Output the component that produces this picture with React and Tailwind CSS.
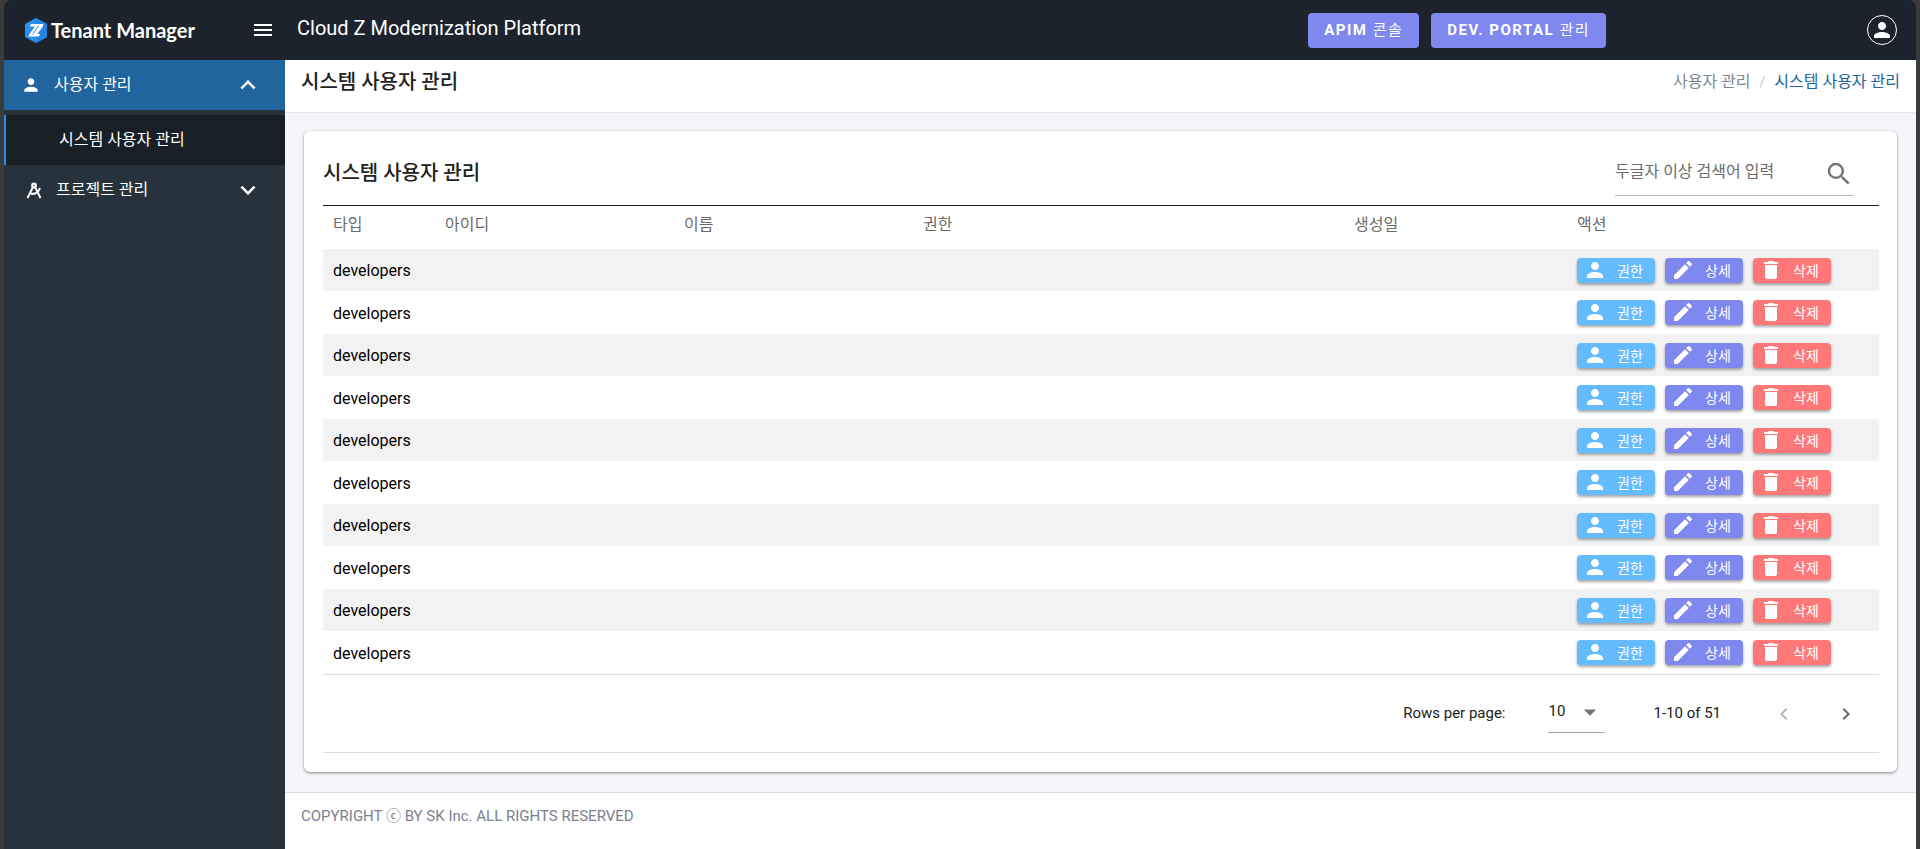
import { useState } from 'react';
import {
  MdArrowDropDown,
  MdChevronLeft,
  MdChevronRight,
  MdDelete,
  MdEdit,
  MdExpandLess,
  MdExpandMore,
  MdMenu,
  MdPerson,
  MdSearch,
} from 'react-icons/md';

const users = Array.from({ length: 10 }, (_, i) => ({
  id: i + 1,
  type: 'developers',
}));

function Logo() {
  return (
    <svg viewBox="0 0 22 25" className="w-[22px] h-[25px] shrink-0" aria-hidden="true">
      <path d="M11 0 22 6v13l-11 6L0 19V6z" fill="#2a8ff0" />
      <path d="M11 0 22 6v13l-11 6z" fill="#2384e4" />
      <path d="M6 6h12.500l-1 3-5 7H15l-1 2.500H3.500l1-2.500L10 8.500H5z" fill="#fff" />
      <path d="m13.500 8-6 8.500" stroke="#2a8ff0" strokeWidth="1" />
    </svg>
  );
}

function CompassIcon() {
  return (
    <svg viewBox="0 0 16 17" className="w-4 h-[17px]" fill="none" stroke="#fff" aria-hidden="true">
      <circle cx="8" cy="3.500" r="1.800" strokeWidth="2.200" />
      <path d="M7.500 4 1.500 16M8.500 4l6 12M4 11.500c4 1 8 0 10-5.500" strokeWidth="2" />
    </svg>
  );
}

function ActionButton({ icon: Icon, label, className }) {
  return (
    <button
      className={`flex items-center w-[78px] h-[25px] pl-[6px] gap-[10px] text-sm leading-6 text-white rounded shadow-[0_2px_3px_rgba(0,0,0,0.35)] ${className}`}
    >
      <Icon className="w-6 h-6 mb-[2px] shrink-0" />
      {label}
    </button>
  );
}

function Header() {
  return (
    <header className="flex items-center h-[60px] bg-[#1c232c] text-white">
      <div className="flex items-center w-[281px] pl-[21px] pr-[10px] shrink-0">
        <Logo />
        <span className="ml-1 font-[Lato] text-xl font-bold">Tenant Manager</span>
        <button className="ml-auto" aria-label="메뉴">
          <MdMenu className="w-6 h-6" />
        </button>
      </div>
      <h1 className="pb-1 pl-3 text-xl">Cloud Z Modernization Platform</h1>
      <div className="flex gap-3 ml-auto mr-[261px] text-[15px]">
        <button className="h-[35px] px-4 tracking-widest bg-[#7e88ee] rounded">
          <b>APIM</b> 콘솔
        </button>
        <button className="h-[35px] px-4 tracking-widest bg-[#7e88ee] rounded">
          <b>DEV. PORTAL</b> 관리
        </button>
      </div>
      <button
        className="flex items-center justify-center w-[30px] h-[30px] mr-[19px] border border-white rounded-full"
        aria-label="내 정보"
      >
        <MdPerson className="w-6 h-6" />
      </button>
    </header>
  );
}

function Sidebar() {
  const [userOpen, setUserOpen] = useState(true);

  return (
    <nav className="w-[281px] shrink-0 bg-[#26333c] text-white">
      <button
        className="flex items-center w-full h-[50px] pl-[17px] pr-[22px] bg-[#21659e]"
        onClick={() => setUserOpen(!userOpen)}
      >
        <MdPerson className="w-5 h-5" />
        <span className="ml-[13px]">사용자 관리</span>
        {userOpen ? (
          <MdExpandLess className="ml-auto w-[30px] h-[30px]" />
        ) : (
          <MdExpandMore className="ml-auto w-[30px] h-[30px]" />
        )}
      </button>
      {userOpen && (
        <a
          href="#users"
          className="flex items-center h-[50px] mt-[5px] pl-[53px] border-l-2 border-[#2a8ff0] bg-[#181f26]"
        >
          시스템 사용자 관리
        </a>
      )}
      <button className="flex items-center w-full h-[50px] pl-[22px] pr-[22px]">
        <CompassIcon />
        <span className="ml-[14px]">프로젝트 관리</span>
        <MdExpandMore className="ml-auto w-[30px] h-[30px]" />
      </button>
    </nav>
  );
}

function UserTable() {
  return (
    <table className="w-full text-left border-b border-separate border-spacing-0 table-fixed border-[#dcdcdc]">
      <thead>
        <tr className="h-[43px] text-[#6b6b6b] align-top">
          <th className="w-[112px] px-[10px] py-[7px] font-normal">타입</th>
          <th className="w-[239px] px-[10px] py-[7px] font-normal">아이디</th>
          <th className="w-[239px] px-[10px] py-[7px] font-normal">이름</th>
          <th className="px-[10px] py-[7px] font-normal">권한</th>
          <th className="w-[223px] px-[10px] py-[7px] font-normal">생성일</th>
          <th className="w-[312px] px-[10px] py-[7px] font-normal">액션</th>
        </tr>
      </thead>
      <tbody>
        {users.map((user) => (
          <tr key={user.id} className="h-[43px] odd:h-[42px] odd:bg-[#f2f2f2] text-black">
            <td className="px-[10px] pt-[2px]">{user.type}</td>
            <td />
            <td />
            <td />
            <td />
            <td className="px-[10px] pt-[9px] pb-2 align-top">
              <div className="flex gap-[10px]">
                <ActionButton icon={MdPerson} label="권한" className="bg-[#64bcff]" />
                <ActionButton icon={MdEdit} label="상세" className="bg-[#7e88ee]" />
                <ActionButton icon={MdDelete} label="삭제" className="bg-[#ff7878]" />
              </div>
            </td>
          </tr>
        ))}
      </tbody>
    </table>
  );
}

function Pagination() {
  return (
    <div className="flex items-center justify-end h-[78px] pr-5 text-[15px] border-b border-[#dcdcdc]">
      <label htmlFor="rows">Rows per page:</label>
      <div className="relative ml-[43px]">
        <select
          id="rows"
          className="w-[57px] h-[38px] pb-1 appearance-none border-b border-[#a5a5a5] bg-transparent"
        >
          <option>10</option>
        </select>
        <MdArrowDropDown className="absolute right-0 top-[2px] w-[30px] h-[30px] text-[#757575] pointer-events-none" />
      </div>
      <span className="ml-12">1-10 of 51</span>
      <button className="ml-[51px] text-[#b5b5b5]" aria-label="이전" disabled>
        <MdChevronLeft className="w-6 h-6" />
      </button>
      <button className="ml-[38px] mr-px text-[#666]" aria-label="다음">
        <MdChevronRight className="w-6 h-6" />
      </button>
    </div>
  );
}

export default function App() {
  return (
    <div className="min-h-screen px-1 bg-[#3b3b3b] font-[Roboto,'Noto_Sans_CJK_KR',sans-serif] text-base text-[#212121]">
      <div className="flex flex-col min-h-screen overflow-hidden rounded-t-lg">
        <Header />
        <div className="flex flex-1">
          <Sidebar />
          <div className="flex flex-col flex-1 min-w-0 bg-[#f5f6fa]">
            <div className="flex justify-between h-[53px] pl-4 pr-4 pt-[6px] bg-white border-b border-[#e7e7e7]">
              <h2 className="text-xl font-medium leading-8">시스템 사용자 관리</h2>
              <div className="flex gap-[9px] leading-8 text-[#7b8794]">
                <a href="#user">사용자 관리</a>
                <span className="text-sm leading-8 text-[#c4c4c4]">/</span>
                <a href="#users" className="text-[#21659e]">
                  시스템 사용자 관리
                </a>
              </div>
            </div>

            <main className="flex-1 px-[19px] pt-[18px] pb-4">
              <section className="pl-[19px] pr-[18px] pb-[19px] bg-white rounded-md shadow-[0_1px_3px_rgba(0,0,0,0.45)]">
                <div className="flex items-start justify-between h-[75px] pr-[25px] pt-6 border-b border-[#212121]">
                  <h3 className="pt-[2px] text-xl font-medium leading-8">시스템 사용자 관리</h3>
                  <div className="flex w-[239px] h-[41px] border-b border-[#b9b9b9]">
                    <input
                      type="text"
                      aria-label="검색"
                      placeholder="두글자 이상 검색어 입력"
                      className="flex-1 min-w-0 h-8 outline-none placeholder:text-[#6b6b6b]"
                    />
                    <button className="flex items-center h-[38px]" aria-label="검색">
                      <MdSearch className="w-[30px] h-[30px] text-[#757575]" />
                    </button>
                  </div>
                </div>
                <UserTable />
                <Pagination />
              </section>
            </main>

            <footer className="h-[57px] pl-4 pt-3 bg-white border-t border-[#d8dade] text-[15px] text-[#7b8190]">
              COPYRIGHT ⓒ BY SK Inc. ALL RIGHTS RESERVED
            </footer>
          </div>
        </div>
      </div>
    </div>
  );
}
